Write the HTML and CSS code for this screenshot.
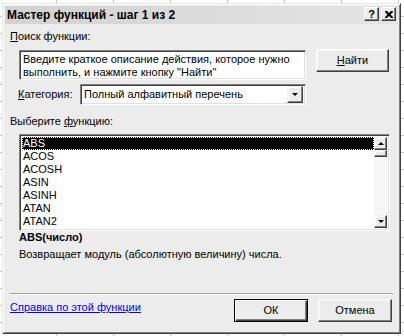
FILE: index.html
```html
<!DOCTYPE html>
<html lang="ru">
<head>
<meta charset="utf-8">
<link rel="stylesheet" href="styles.css">
</head>
<body>
<div class="sheet">
  <div class="dialog">
    <div class="titlebar">
      <span class="title">Мастер функций - шаг 1 из 2</span>
      <div class="tbtns">
        <span class="tbtn help">?</span>
        <span class="tbtn close"><svg width="8" height="7" viewBox="0 0 8 7"><path d="M0 0h2l2 2 2-2h2v1l-2.5 2.5L8 6v1H6L4 5 2 7H0V6l2.5-2.5L0 1z" fill="#000"/></svg></span>
      </div>
    </div>
    <div class="content">
      <div class="lbl search-lbl"><u>П</u>оиск функции:</div>
      <div class="search-row">
        <div class="field textarea">Введите краткое описание действия, которое нужно<br>выполнить, и нажмите кнопку "Найти"</div>
        <div class="btn find"><u>Н</u>айти</div>
      </div>
      <div class="cat-row">
        <span class="lbl cat-lbl"><u>К</u>атегория:</span>
        <div class="field select">
          <span class="select-text">Полный алфавитный перечень</span>
          <span class="ddbtn"><span class="arrow-down"></span></span>
        </div>
      </div>
      <div class="lbl pick-lbl">Выберите <u>ф</u>ункцию:</div>
      <div class="field list">
        <div class="items">
          <div class="item selected"><span class="focus">ABS</span></div>
          <div class="item">ACOS</div>
          <div class="item">ACOSH</div>
          <div class="item">ASIN</div>
          <div class="item">ASINH</div>
          <div class="item">ATAN</div>
          <div class="item">ATAN2</div>
        </div>
        <div class="scrollbar">
          <span class="sbtn"><span class="arrow-up"></span></span>
          <span class="thumb"></span>
          <span class="track"></span>
          <span class="sbtn"><span class="arrow-down"></span></span>
        </div>
      </div>
      <div class="sig">ABS(число)</div>
      <div class="desc">Возвращает модуль (абсолютную величину) числа.</div>
      <div class="separator"></div>
      <div class="bottom-row">
        <a class="help-link" href="#">Справка по этой функции</a>
        <div class="btns">
          <div class="btn default">ОК</div>
          <div class="btn">Отмена</div>
        </div>
      </div>
    </div>
  </div>
</div>
</body>
</html>
```

FILE: styles.css
```css
* { box-sizing: border-box; }
html, body { margin: 0; padding: 0; }
body {
  width: 404px;
  height: 336px;
  overflow: hidden;
  font-family: "Liberation Sans", Arial, sans-serif;
  font-size: 11px;
  line-height: 13px;
  color: #000;
}
.sheet {
  position: relative;
  width: 404px;
  height: 336px;
  background-color: #ffffff;
  background-image:
    repeating-linear-gradient(to right, transparent 0, transparent 56px, #c8c8c8 56px, #c8c8c8 57px),
    repeating-linear-gradient(to bottom, transparent 0, transparent 16px, #c8c8c8 16px, #c8c8c8 17px);
  background-position: 0 0, 0 0;
}
.dialog {
  position: absolute;
  left: 2px;
  top: 3px;
  width: 399px;
  height: 331px;
  background: #ececec;
  border: 1px solid;
  border-color: #e6e6e6 #404040 #404040 #e6e6e6;
  box-shadow: inset 1px 1px 0 #ffffff, inset -1px -1px 0 #808080;
  padding: 2px 2px 2px 2px;
  display: flex;
  flex-direction: column;
}
.titlebar {
  height: 18px;
  background: linear-gradient(to right, #d2d2d2, #e4e4e4);
  display: flex;
  align-items: center;
  justify-content: space-between;
  padding: 0 2px 0 2px;
  flex: none;
}
.title {
  font-weight: bold;
  font-size: 12px;
  line-height: 14px;
}
.tbtns { display: flex; gap: 2px; align-self: flex-start; margin-top: 1px; }
.tbtn {
  width: 15px;
  height: 14px;
  background: #ececec;
  border: 1px solid;
  border-color: #ffffff #404040 #404040 #ffffff;
  box-shadow: inset -1px -1px 0 #808080;
  display: flex;
  align-items: center;
  justify-content: center;
  font-weight: bold;
  font-size: 11px;
  line-height: 10px;
}
.help { padding-bottom: 1px; }
.close svg { display: block; }
.content {
  flex: 1;
  display: flex;
  flex-direction: column;
  padding: 0 5px 0 5px;
}
.lbl { white-space: nowrap; }
.search-lbl { margin-top: 6px; }
.field {
  background: #ffffff;
  border: 1px solid;
  border-color: #808080 #ffffff #ffffff #808080;
  box-shadow: inset 1px 1px 0 #404040, inset -1px -1px 0 #e0e0e0;
}
.search-row {
  margin-top: 6px;
  display: flex;
  align-items: flex-start;
}
.textarea {
  margin-left: 9px;
  margin-top: 1px;
  width: 287px;
  height: 30px;
  padding: 2px 3px;
  white-space: nowrap;
}
.btn {
  width: 74px;
  height: 23px;
  background: #ececec;
  border: 1px solid;
  border-color: #ffffff #404040 #404040 #ffffff;
  box-shadow: inset -1px -1px 0 #808080, inset 1px 1px 0 #f4f4f4;
  display: flex;
  align-items: center;
  justify-content: center;
}
.find { margin-left: 10px; width: 73px; }
.cat-row {
  margin-top: 4px;
  display: flex;
  align-items: center;
}
.cat-lbl { margin-left: 8px; width: 62px; }
.select {
  width: 226px;
  height: 21px;
  display: flex;
  align-items: center;
  justify-content: space-between;
  padding: 2px;
}
.select-text { padding-left: 1px; }
.ddbtn {
  width: 16px;
  height: 17px;
  background: #ececec;
  border: 1px solid;
  border-color: #f4f4f4 #404040 #404040 #f4f4f4;
  box-shadow: inset -1px -1px 0 #808080, inset 1px 1px 0 #ffffff;
  display: flex;
  align-items: center;
  justify-content: center;
}
.arrow-down {
  width: 0; height: 0;
  border-left: 3px solid transparent;
  border-right: 3px solid transparent;
  border-top: 3px solid #000;
}
.arrow-up {
  width: 0; height: 0;
  border-left: 3px solid transparent;
  border-right: 3px solid transparent;
  border-bottom: 3px solid #000;
}
.pick-lbl { margin-top: 10px; }
.list {
  margin-top: 6px;
  margin-left: 9px;
  width: 371px;
  height: 97px;
  padding: 2px;
  display: flex;
  overflow: hidden;
}
.items { flex: 1; overflow: hidden; }
.item {
  height: 13px;
  line-height: 13px;
  padding-left: 1px;
  white-space: nowrap;
}
.item.selected {
  background: #000;
  color: #fff;
  padding: 0;
  outline: 1px dotted #ffffff;
  outline-offset: -1px;
}
.focus { padding-left: 1px; }
.scrollbar {
  width: 13px;
  display: flex;
  flex-direction: column;
  background: #f6f6f6;
}
.sbtn, .thumb {
  height: 13px;
  background: #ececec;
  border: 1px solid;
  border-color: #f4f4f4 #404040 #404040 #f4f4f4;
  box-shadow: inset -1px -1px 0 #808080, inset 1px 1px 0 #ffffff;
  display: flex;
  align-items: center;
  justify-content: center;
  flex: none;
}
.thumb { height: 7px; }
.track { flex: 1; }
.sig { margin-top: 0; margin-left: 9px; font-weight: bold; }
.desc { margin-top: 4px; margin-left: 9px; }
.separator {
  margin-top: 32px;
  height: 2px;
  border-top: 1px solid #a0a0a0;
  border-bottom: 1px solid #ffffff;
}
.bottom-row {
  margin-top: 4px;
  display: flex;
  justify-content: space-between;
  align-items: flex-start;
}
.help-link {
  margin-top: 2px;
  color: #0000ff;
  text-decoration: underline;
}
.btns { display: flex; gap: 10px; margin-right: 1px; }
.btn.default {
  border-color: #000;
  box-shadow: inset 1px 1px 0 #ffffff, inset -1px -1px 0 #404040, inset -2px -2px 0 #808080;
}
```
